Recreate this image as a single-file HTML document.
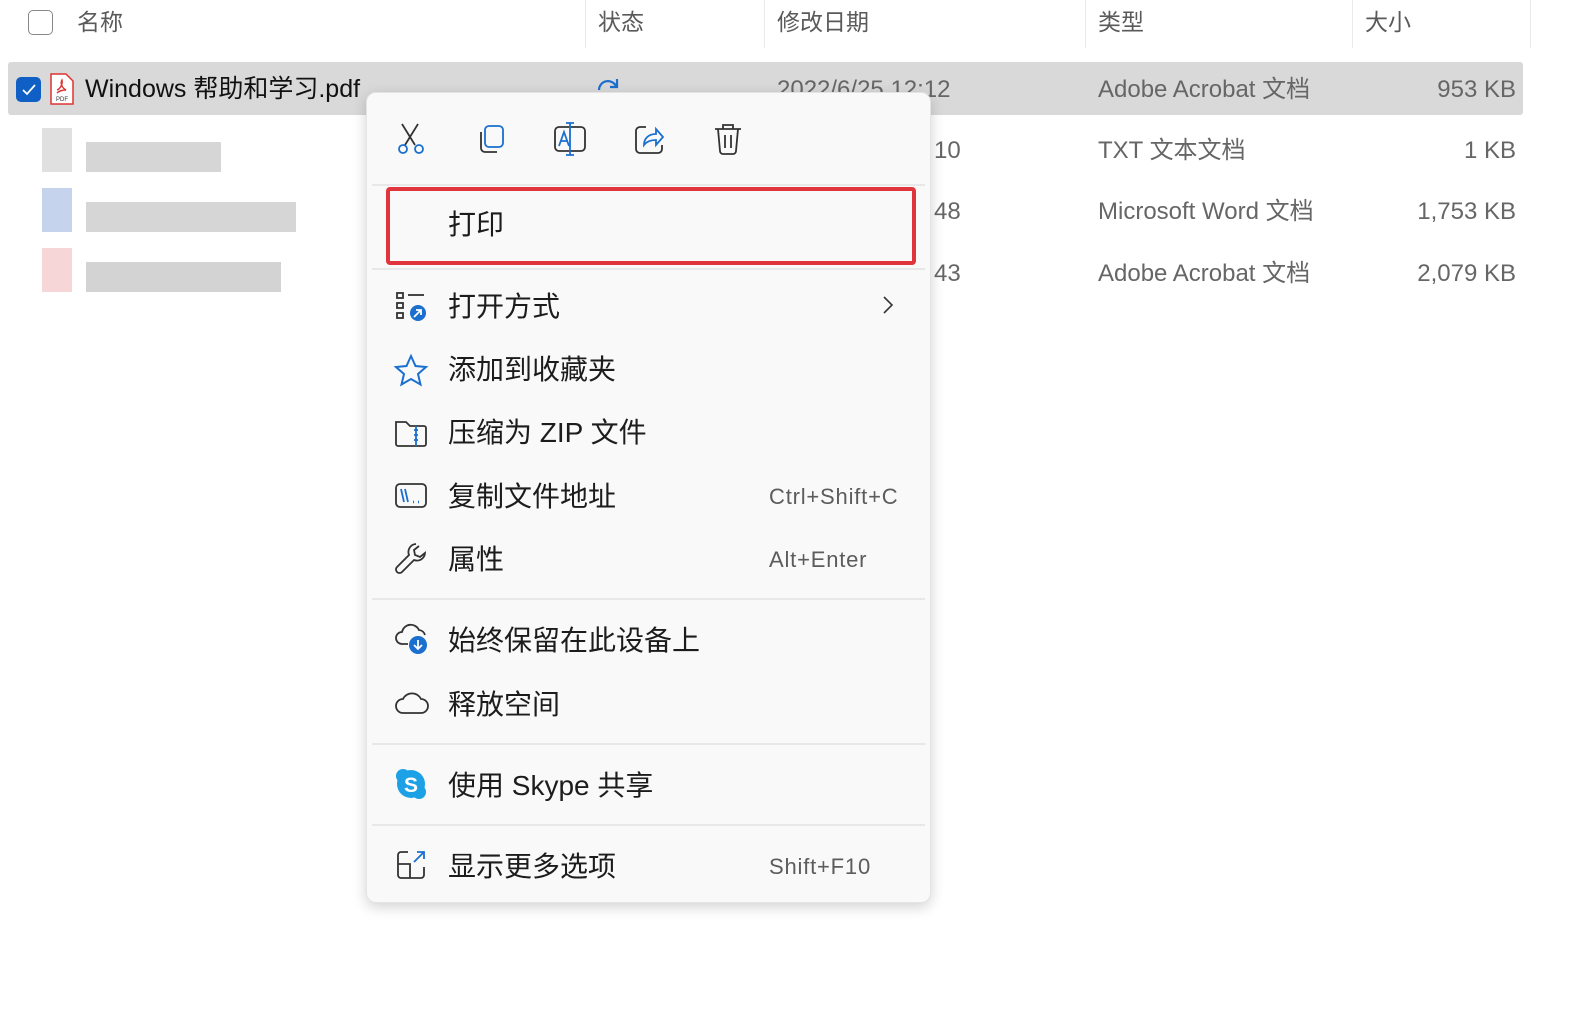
<!DOCTYPE html>
<html><head><meta charset="utf-8"><style>
*{margin:0;padding:0;box-sizing:border-box}
body{width:1583px;height:1021px;background:#fff;position:relative;overflow:hidden;font-family:"Liberation Sans","Noto Sans CJK SC",sans-serif;}
.a{position:absolute;white-space:nowrap;line-height:32px}
.h{font-size:23px;color:#5a5a5a;top:6px}
.d{position:absolute;top:0;width:1px;height:48px;background:#eaeaea}
.c{font-size:24px;color:#666}
.r{font-size:24px;color:#666;text-align:right;width:200px}
.m{font-size:28px;color:#1c1c1c;line-height:36px}
.s{font-size:22px;color:#5c5c5c;letter-spacing:0.8px}
.sep{position:absolute;left:372px;width:553px;height:2px;background:#e8e8e8}
svg{position:absolute;overflow:visible}
.px{position:absolute;background:#d4d4d4}
</style></head><body>
<div class="a" style="left:28px;top:10px;width:25px;height:25px;border:1.5px solid #888;border-radius:5px"></div>
<div class="a h" style="left:77px">名称</div>
<div class="d" style="left:585px"></div>
<div class="a h" style="left:598px">状态</div>
<div class="d" style="left:764px"></div>
<div class="a h" style="left:777px">修改日期</div>
<div class="d" style="left:1085px"></div>
<div class="a h" style="left:1098px">类型</div>
<div class="d" style="left:1352px"></div>
<div class="a h" style="left:1365px">大小</div>
<div class="d" style="left:1530px"></div>
<div class="a" style="left:8px;top:62px;width:1515px;height:53px;background:#d9d9d9;border-radius:3px"></div>
<div class="a" style="left:16px;top:77px;width:25px;height:25px;background:#0f5fc4;border-radius:5px"></div>
<svg style="left:16px;top:77px" width="25" height="25"><path d="M7 13l4 4 8-9" stroke="#fff" stroke-width="1.8" fill="none"/></svg>
<svg style="left:49px;top:73px" width="26" height="32"><path d="M2 1h15l7 7v23H2z" fill="#fff" stroke="#d33" stroke-width="1.5"/><path d="M8 17c3-1 6-6 5-10-2 3 0 8 4 10-3 0-7 1-9 3" stroke="#d33" stroke-width="1.4" fill="none"/><text x="7" y="28" font-size="6" fill="#333" font-family="Liberation Sans">PDF</text></svg>
<div class="a" style="left:85px;top:73px;font-size:25px;color:#111">Windows 帮助和学习.pdf</div>
<svg style="left:596px;top:76px" width="24" height="16"><path d="M3 14a9 9 0 0 1 17-4" stroke="#1a6fcf" stroke-width="2.2" fill="none"/><path d="M21 3v8h-7" stroke="#1a6fcf" stroke-width="2.2" fill="none"/></svg>
<div class="a c" style="left:777px;top:74px">2022/6/25 12:12</div>
<div class="a c" style="left:1098px;top:74px">Adobe Acrobat 文档</div>
<div class="a r" style="left:1316px;top:74px">953 KB</div>
<div class="a c" style="left:934px;top:135px">10</div>
<div class="a c" style="left:1098px;top:135px">TXT 文本文档</div>
<div class="a r" style="left:1316px;top:135px">1 KB</div>
<div class="a c" style="left:934px;top:196px">48</div>
<div class="a c" style="left:1098px;top:196px">Microsoft Word 文档</div>
<div class="a r" style="left:1316px;top:196px">1,753 KB</div>
<div class="a c" style="left:934px;top:258px">43</div>
<div class="a c" style="left:1098px;top:258px">Adobe Acrobat 文档</div>
<div class="a r" style="left:1316px;top:258px">2,079 KB</div>
<div class="px" style="left:42px;top:128px;width:30px;height:44px;background:#e0e0e0"></div>
<div class="px" style="left:86px;top:142px;width:135px;height:30px;background:#d6d6d6"></div>
<div class="px" style="left:42px;top:188px;width:30px;height:44px;background:#c6d3ec"></div>
<div class="px" style="left:86px;top:202px;width:210px;height:30px;background:#d6d6d6"></div>
<div class="px" style="left:42px;top:248px;width:30px;height:44px;background:#f6d6d6"></div>
<div class="px" style="left:86px;top:262px;width:195px;height:30px;background:#d3d3d3"></div>
<div class="a" style="left:366px;top:92px;width:565px;height:811px;background:#f9f9f9;border-radius:10px;box-shadow:0 4px 14px rgba(0,0,0,0.18);border:1px solid #e4e4e4"></div>
<svg style="left:396px;top:122px" width="32" height="34" fill="none" stroke="#1a6fcf" stroke-width="1.8"><path d="M6 2l13 21M22 2L9 23" stroke="#333"/><circle cx="7" cy="27" r="4"/><circle cx="23" cy="27" r="4"/></svg>
<svg style="left:476px;top:124px" width="30" height="30" fill="none" stroke-width="1.8"><rect x="9" y="2" width="18" height="21" rx="4" stroke="#1a6fcf"/><path d="M5 8v16a4 4 0 0 0 4 4h12" stroke="#333"/></svg>
<svg style="left:553px;top:121px" width="34" height="36" fill="none" stroke-width="1.8"><rect x="2" y="6" width="30" height="24" rx="4" stroke="#333"/><path d="M17 2v32M13 2h8M13 34h8" stroke="#1a6fcf"/><path d="M6 25l5-14 5 14M8 20h6" stroke="#1a6fcf"/></svg>
<svg style="left:634px;top:123px" width="32" height="32" fill="none" stroke-width="1.8"><path d="M12 4H6a4 4 0 0 0-4 4v18a4 4 0 0 0 4 4h18a4 4 0 0 0 4-4v-4" stroke="#333"/><path d="M10 22c0-7 5-11 12-11V6l7 8-7 8v-5c-5 0-9 1-12 5z" stroke="#1a6fcf"/></svg>
<svg style="left:713px;top:122px" width="30" height="34" fill="none" stroke="#333" stroke-width="1.8"><path d="M2 7h26M10 7V3h10v4M5 7l2 22a3 3 0 0 0 3 3h10a3 3 0 0 0 3-3l2-22M12 13v13M18 13v13"/></svg>
<div class="sep" style="top:184px"></div>
<div class="a" style="left:386px;top:187px;width:530px;height:78px;border:4px solid #e0353d;border-radius:4px"></div>
<div class="a m" style="left:448px;top:207px">打印</div>
<div class="sep" style="top:268px"></div>
<svg style="left:396px;top:292px" width="32" height="30" fill="none" stroke-width="1.8"><rect x="1" y="1" width="6" height="5" stroke="#333"/><rect x="1" y="11" width="6" height="5" stroke="#333"/><rect x="1" y="21" width="6" height="5" stroke="#333"/><path d="M12 3h16" stroke="#333"/><circle cx="22" cy="21" r="8" fill="#1a6fcf" stroke="none"/><path d="M18 25l7-7M20 18h5v5" stroke="#fff"/></svg>
<div class="a m" style="left:448px;top:289px">打开方式</div>
<svg style="left:882px;top:295px" width="12" height="20" fill="none" stroke="#333" stroke-width="1.6"><path d="M2 2l8 8-8 8"/></svg>
<svg style="left:394px;top:354px" width="34" height="32" fill="none" stroke="#1a6fcf" stroke-width="2"><path d="M17 2l4.5 10 10.5 1-8 7 2.5 10.5L17 25l-9.5 5.5L10 20l-8-7 10.5-1z"/></svg>
<div class="a m" style="left:448px;top:352px">添加到收藏夹</div>
<svg style="left:394px;top:418px" width="34" height="30" fill="none" stroke="#333" stroke-width="1.8"><path d="M2 4h10l4 4h14a2 2 0 0 1 2 2v16a2 2 0 0 1-2 2H4a2 2 0 0 1-2-2z"/><path d="M22 8v20M20 12h4M20 17h4M20 22h4" stroke="#1a6fcf"/></svg>
<div class="a m" style="left:448px;top:415px">压缩为 ZIP 文件</div>
<svg style="left:394px;top:482px" width="34" height="28" fill="none" stroke="#333" stroke-width="1.8"><rect x="2" y="2" width="30" height="23" rx="4"/><path d="M7 7l3 13M11 7l3 13" stroke="#1a6fcf"/><path d="M19 20h1M24 20h1" stroke="#1a6fcf" stroke-width="2.5"/></svg>
<div class="a m" style="left:448px;top:479px">复制文件地址</div>
<div class="a s" style="left:769px;top:481px">Ctrl+Shift+C</div>
<svg style="left:394px;top:542px" width="34" height="34" fill="none" stroke="#333" stroke-width="1.8"><path d="M22 2a8 8 0 0 0-7 11L3 25a3 3 0 0 0 5 5l12-12a8 8 0 0 0 11-7l-5 4-5-2-1-5 5-4"/></svg>
<div class="a m" style="left:448px;top:542px">属性</div>
<div class="a s" style="left:769px;top:544px">Alt+Enter</div>
<div class="sep" style="top:598px"></div>
<svg style="left:394px;top:622px" width="36" height="34" fill="none" stroke="#333" stroke-width="1.8"><path d="M14 22H8a6 6 0 0 1 0-12 9 9 0 0 1 17-2 7 7 0 0 1 6 5"/><circle cx="24" cy="23" r="9" fill="#1a6fcf" stroke="none"/><path d="M24 18v9M20 23l4 4 4-4" stroke="#fff"/></svg>
<div class="a m" style="left:448px;top:623px">始终保留在此设备上</div>
<svg style="left:394px;top:690px" width="36" height="26" fill="none" stroke="#333" stroke-width="1.8"><path d="M9 23a7 7 0 0 1 0-14 10 10 0 0 1 18 0 7 7 0 0 1 0 14z"/></svg>
<div class="a m" style="left:448px;top:687px">释放空间</div>
<div class="sep" style="top:743px"></div>
<svg style="left:395px;top:768px" width="32" height="32"><circle cx="16" cy="16" r="14" fill="#1da1e6"/><circle cx="8" cy="8" r="7" fill="#1da1e6"/><circle cx="24" cy="24" r="7" fill="#1da1e6"/><text x="9" y="24" font-size="21" font-weight="bold" fill="#fff" font-family="Liberation Sans">S</text></svg>
<div class="a m" style="left:448px;top:768px">使用 Skype 共享</div>
<div class="sep" style="top:824px"></div>
<svg style="left:396px;top:850px" width="32" height="30" fill="none" stroke="#333" stroke-width="1.8"><path d="M12 2H5a3 3 0 0 0-3 3v20a3 3 0 0 0 3 3h20a3 3 0 0 0 3-3v-8M2 14h12v14"/><path d="M18 12l10-10M21 2h7v7" stroke="#1a6fcf"/></svg>
<div class="a m" style="left:448px;top:849px">显示更多选项</div>
<div class="a s" style="left:769px;top:851px">Shift+F10</div>
</body></html>
